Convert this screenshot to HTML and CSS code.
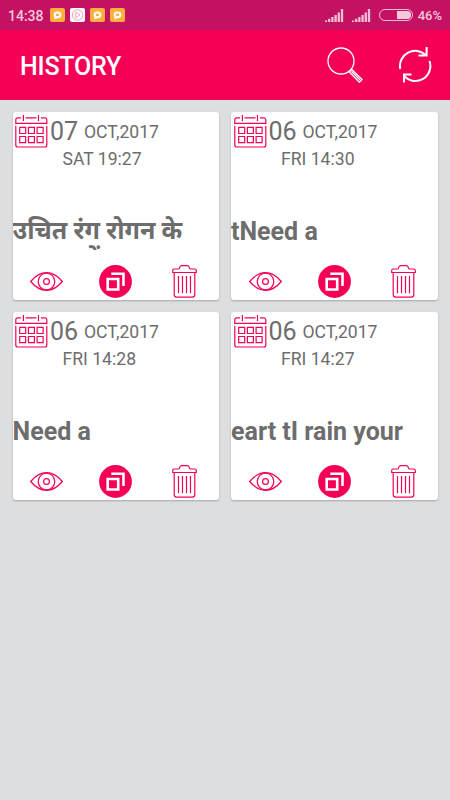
FILE: index.html
```html
<!DOCTYPE html>
<html lang="en">
<head>
  <meta charset="UTF-8" />
  <meta name="viewport" content="width=device-width, initial-scale=1.0" />
  <title>History</title>
  <link rel="stylesheet" href="styles.css">
</head>
<body>
  <!-- Shared icons -->
  <svg class="sprite" width="0" height="0">
    <symbol id="calendar" viewBox="0 0 33 33">
      <path d="M.8 9.2V4.7Q.8 2.8 2.8 2.8H6M10.5 2.8H21.5M26 2.8H30Q31.8 2.8 31.8 4.7V9.2M1 8.4H31.6M.8 11V30Q.8 32 2.8 32H30Q31.8 32 31.8 30V11M8.4 0V6M23.5 0V6" />
      <path d="M4.7 12.3H10.7V18.5H4.7ZM13.4 12.3H19.4V18.5H13.4ZM22.1 12.3H28.1V18.5H22.1ZM4.7 21.5H10.7V27.7H4.7ZM13.4 21.5H19.4V27.7H13.4ZM22.1 21.5H28.1V27.7H22.1Z" />
    </symbol>
    <symbol id="eye" viewBox="0 0 33 33">
      <path d="M.7 16.5Q8 7.7 16.5 7.7T32.3 16.5Q25 25.3 16.5 25.3T.7 16.5Z" />
      <circle cx="16.5" cy="16.5" r="8.3" />
      <circle cx="16.5" cy="16.5" r="2.9" />
    </symbol>
    <symbol id="copy" viewBox="0 0 33 33">
      <circle class="disc" cx="16.5" cy="16.5" r="16.4" />
      <path class="sheet" d="M8.7 14H19.2V24.5H8.7ZM12.3 8.7H24.5V20.9" />
    </symbol>
    <symbol id="trash" viewBox="0 0 33 33">
      <path d="M4.7 7.5V5.5Q4.7 4 6.2 4H10.8Q11.5 4 11.7 2.7Q12 .7 13.5.7H19.5Q21 .7 21.3 2.7Q21.5 4 22.2 4H26.8Q28.3 4 28.3 5.5V7.5ZM6.2 7.7V29.5Q6.2 32.2 8.8 32.2H24.2Q26.8 32.2 26.8 29.5V7.7M10.5 11V28.3M14.5 11V28.3M18.5 11V28.3M22.5 11V28.3" />
    </symbol>
    <symbol id="chat" viewBox="0 0 15 14">
      <path d="M4.5 8.5L4.3 11.5L7.5 10Z" fill="#fff" stroke="none" />
      <ellipse cx="7.5" cy="6.8" rx="2.9" ry="2.4" />
    </symbol>
  </svg>

  <div class="status-bar">
    <span class="clock">14:38</span>
    <div class="notices">
      <svg class="notice"><use href="#chat" /></svg>
      <svg class="notice play" viewBox="0 0 15 14">
        <circle cx="7.5" cy="7" r="5.2" />
        <path d="M5.8 4.3L10 7L5.8 9.7Z" />
      </svg>
      <svg class="notice"><use href="#chat" /></svg>
      <svg class="notice"><use href="#chat" /></svg>
    </div>
    <div class="system">
      <svg class="signal" viewBox="0 0 19 13">
        <path d="M1 11.5V13M4.2 9.7V13M7.4 8V13M10.6 6V13M13.8 3.5V13M17 0V13" />
      </svg>
      <svg class="signal" viewBox="0 0 19 13">
        <path d="M1 11.5V13M4.2 9.7V13M7.4 8V13M10.6 6V13M13.8 3.5V13M17 0V13" />
      </svg>
      <div class="battery"><span class="level"></span></div>
      <span class="percent">46%</span>
    </div>
  </div>

  <header class="toolbar">
    <h1>HISTORY</h1>
    <svg class="search" viewBox="0 0 36 36">
      <circle cx="14" cy="14" r="13" />
      <path d="M22.3 25L24.8 22.5L35 32.5L32.3 35.2ZM24.5 24.5L33 33" />
    </svg>
    <svg class="refresh" viewBox="0 0 34 36">
      <path d="M2.3 22A15 15 0 0 1 28 8.7M31.5 14A15 15 0 0 1 5.5 28.2M28.6 0V8.5H20.5M6 35.5V27.5H13.5" />
    </svg>
  </header>

  <main class="grid">
    <div class="card">
      <div class="date">
        <svg class="icon"><use href="#calendar" /></svg>
        <span class="day">07</span>
        <span class="month">OCT,2017</span>
      </div>
      <div class="time">SAT 19:27</div>
      <p class="note hindi" lang="hi">उचित रंग रोगन के सामान में</p>
      <div class="actions">
        <svg class="icon"><use href="#eye" /></svg>
        <svg class="icon"><use href="#copy" /></svg>
        <svg class="icon"><use href="#trash" /></svg>
      </div>
    </div>

    <div class="card">
      <div class="date">
        <svg class="icon"><use href="#calendar" /></svg>
        <span class="day">06</span>
        <span class="month">OCT,2017</span>
      </div>
      <div class="time">FRI 14:30</div>
      <p class="note">tNeed a</p>
      <div class="actions">
        <svg class="icon"><use href="#eye" /></svg>
        <svg class="icon"><use href="#copy" /></svg>
        <svg class="icon"><use href="#trash" /></svg>
      </div>
    </div>

    <div class="card">
      <div class="date">
        <svg class="icon"><use href="#calendar" /></svg>
        <span class="day">06</span>
        <span class="month">OCT,2017</span>
      </div>
      <div class="time">FRI 14:28</div>
      <p class="note">Need a</p>
      <div class="actions">
        <svg class="icon"><use href="#eye" /></svg>
        <svg class="icon"><use href="#copy" /></svg>
        <svg class="icon"><use href="#trash" /></svg>
      </div>
    </div>

    <div class="card">
      <div class="date">
        <svg class="icon"><use href="#calendar" /></svg>
        <span class="day">06</span>
        <span class="month">OCT,2017</span>
      </div>
      <div class="time">FRI 14:27</div>
      <p class="note">eart tI rain your</p>
      <div class="actions">
        <svg class="icon"><use href="#eye" /></svg>
        <svg class="icon"><use href="#copy" /></svg>
        <svg class="icon"><use href="#trash" /></svg>
      </div>
    </div>
  </main>
</body>
</html>
```
FILE: styles.css
```css
* {
  margin: 0;
  padding: 0;
  box-sizing: border-box;
}

body {
  height: 800px;
  background: #dddee0;
  font-family: Roboto, "Noto Sans", sans-serif;
  color: #6d6d6d;
  overflow: hidden;
}

svg {
  display: block;
  fill: none;
}

.sprite {
  display: none;
}

/* Status bar */
.status-bar {
  display: flex;
  align-items: center;
  height: 30px;
  padding: 0 8px;
  background: #c51162;
  color: #f3c9dc;
  font-size: 14px;
  font-weight: 500;
}

.clock {
  width: 42px;
  padding-top: 1px;
}

.notices {
  display: flex;
  gap: 5px;
}

.notice {
  width: 15px;
  height: 14px;
  border-radius: 2px;
  background: #fbb03b;
  stroke: #fff;
  stroke-width: 2;
}

.notice.play {
  background: #fff;
  stroke: #f08a9f;
  stroke-width: 0.8;
}

.system {
  display: flex;
  align-items: center;
  margin-left: auto;
}

.signal {
  width: 19px;
  height: 13px;
  margin-right: 8px;
  stroke: #f0bfd5;
  stroke-width: 2.3;
}

.battery {
  display: flex;
  justify-content: flex-end;
  width: 34px;
  height: 12px;
  margin-right: 5px;
  padding: 1px;
  border: 1px solid #f0bfd5;
  border-radius: 6px;
}

.level {
  width: 46%;
  border-radius: 0 5px 5px 0;
  background: #f3c9dc;
}

.percent {
  padding-top: 1px;
  font-size: 13px;
}

/* Toolbar */
.toolbar {
  display: flex;
  align-items: center;
  height: 70px;
  padding: 0 18px 0 20px;
  background: #f50057;
  color: #fff;
}

h1 {
  flex: 1;
  padding-top: 3px;
  font-size: 25px;
  font-weight: 500;
  letter-spacing: -0.2px;
}

.search {
  width: 36px;
  height: 36px;
  margin-right: 35px;
  stroke: #fff;
  stroke-width: 1.3;
}

.refresh {
  width: 34px;
  height: 36px;
  stroke: #fff;
  stroke-width: 2;
}

/* Cards */
.grid {
  display: grid;
  grid-template-columns: 206.5px 206.5px;
  gap: 12px;
  padding: 12px 12.5px;
}

.card {
  display: flex;
  flex-direction: column;
  height: 188px;
  border-radius: 3px;
  background: #fff;
  box-shadow: 0 1px 2px rgba(0, 0, 0, 0.25);
}

.icon {
  width: 33px;
  height: 33px;
  stroke: #f50057;
  stroke-width: 1.2;
}

.date {
  display: flex;
  align-items: center;
  height: 36px;
  padding: 3px 0 0 2.5px;
}

.day {
  width: 36px;
  padding-left: 2px;
  font-size: 25px;
}

.month {
  font-size: 17.6px;
}

.time {
  padding-left: 50px;
  font-size: 17.6px;
  line-height: 22px;
}

.note {
  height: 36px;
  margin-top: 44px;
  padding-top: 1px;
  font-size: 25px;
  font-weight: 700;
  line-height: 33px;
  overflow: hidden;
}

/* Tighter lines, the second one peeks in */
.hindi {
  line-height: 29px;
  padding-top: 2px;
}

.actions {
  display: grid;
  grid-template-columns: repeat(3, 1fr);
  justify-items: center;
  margin-top: 15px;
}

.disc {
  fill: #f50057;
  stroke: none;
}

.sheet {
  stroke: #fff;
  stroke-width: 2.6;
}
```
